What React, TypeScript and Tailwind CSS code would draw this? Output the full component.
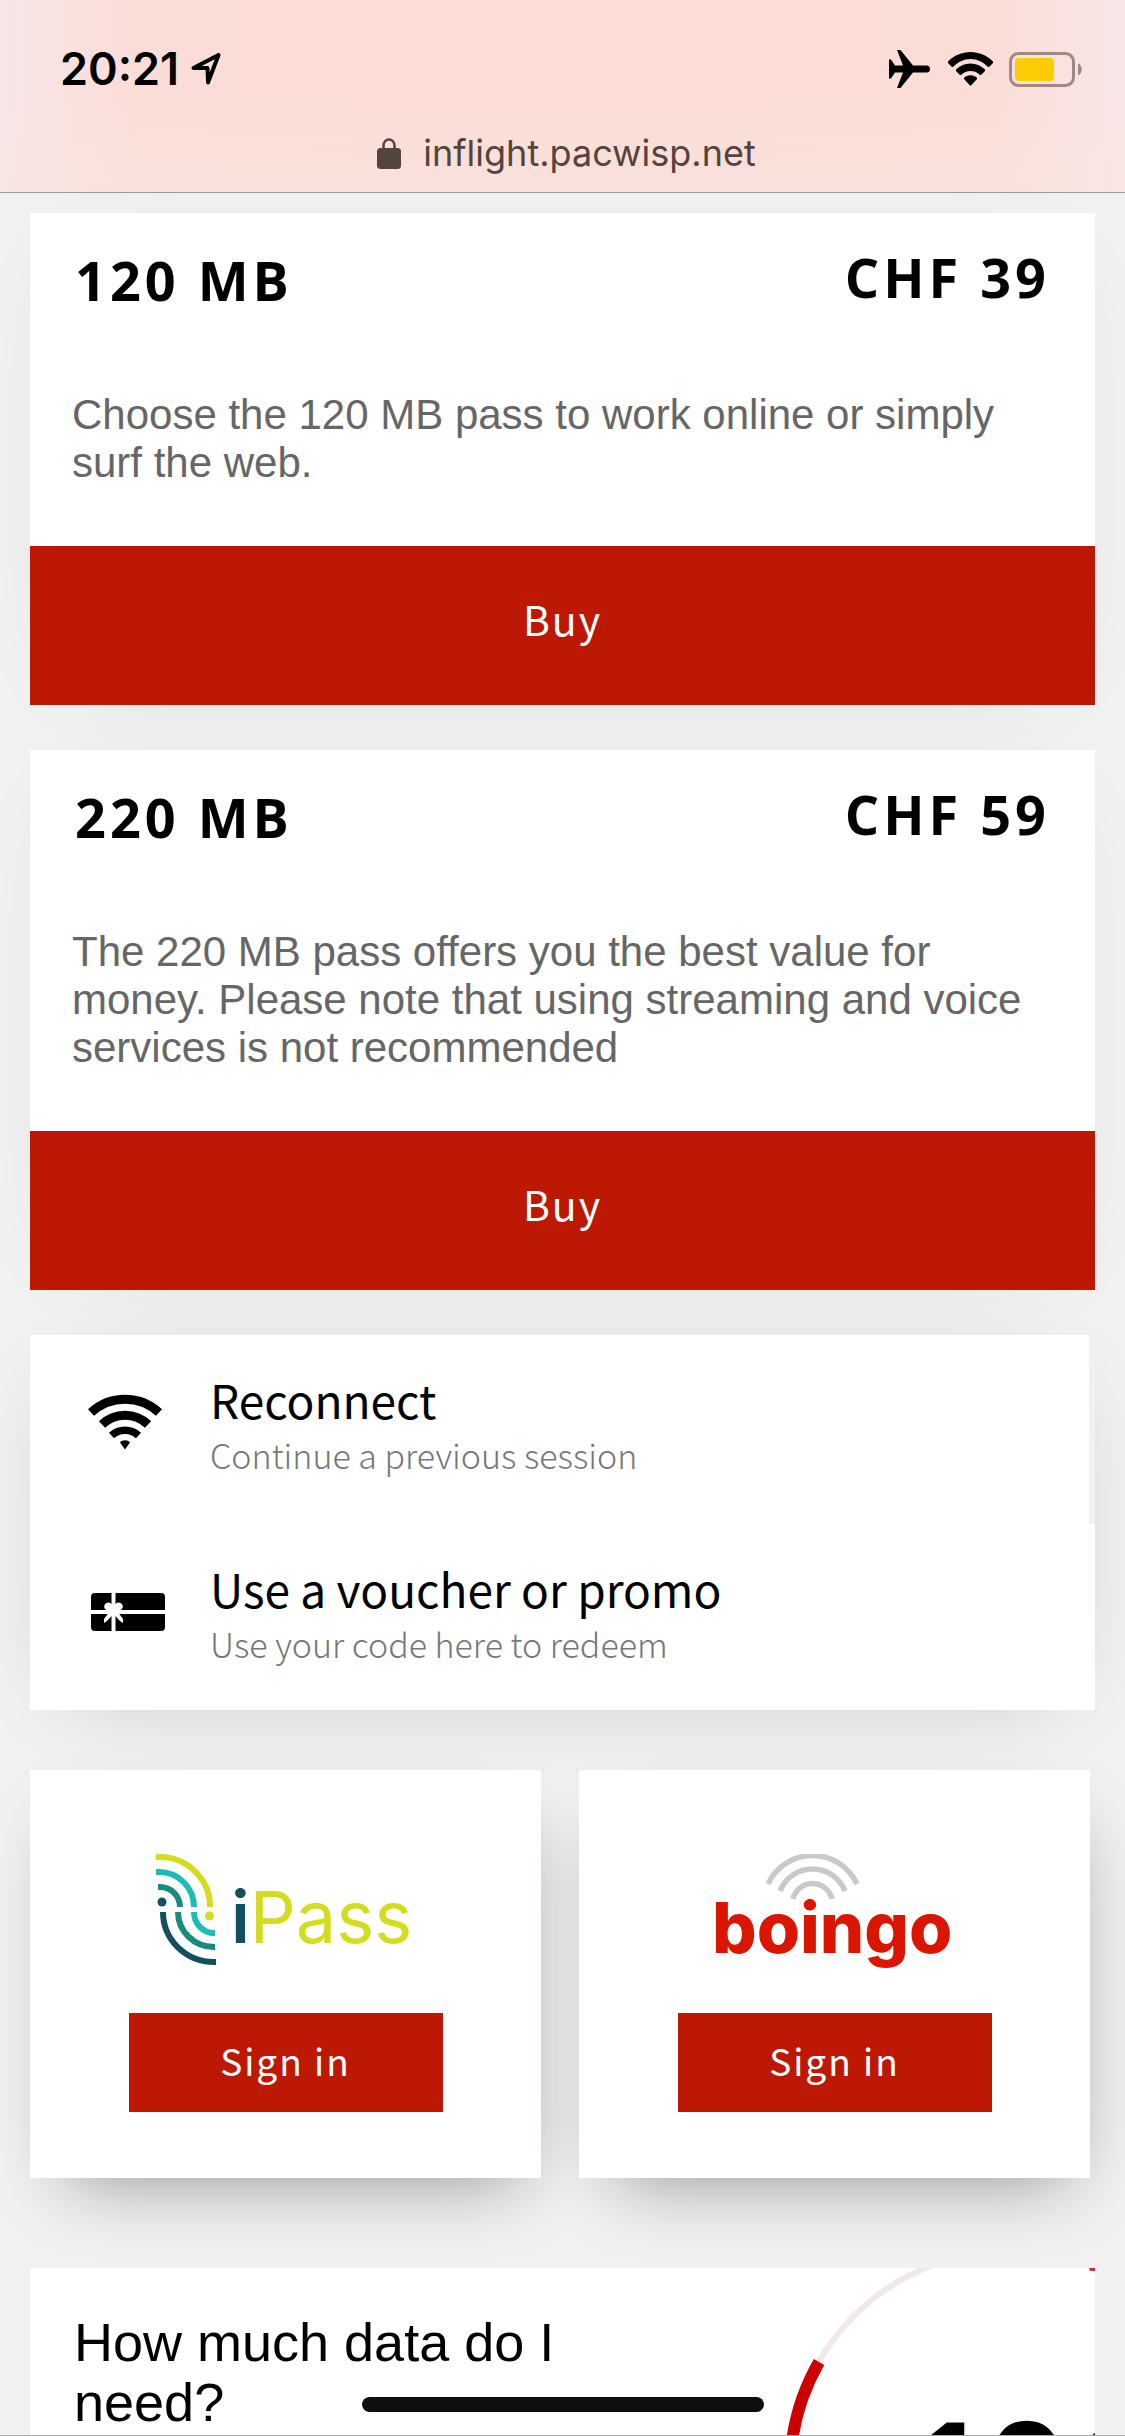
import type { ReactNode } from "react";
import { clsx } from "clsx";

const plans = [
  {
    name: "120 MB",
    price: "CHF 39",
    text: "Choose the 120 MB pass to work online or simply surf the web.",
  },
  {
    name: "220 MB",
    price: "CHF 59",
    text: "The 220 MB pass offers you the best value for money. Please note that using streaming and voice services is not recommended",
  },
];

const headingFont = "font-['Open_Sans',sans-serif]";
const brandFont = "font-['Noto_Sans_CJK_JP','Noto_Sans',sans-serif]";
const bodyFont = "font-['Liberation_Sans',Arial,sans-serif]";

function StatusBar() {
  return (
    <header className="bg-[linear-gradient(to_bottom,transparent_50%,#f9e6e080),linear-gradient(to_right,#f7e6e7,#fbddd7_12%,#fbdcd6_50%,#fbddd7_88%,#f8e6e7)] border-b border-[#a09a9c] pt-[37px] pb-[11px] font-['Inter',sans-serif]">
      <div className="h-16 flex items-center justify-between pl-15 pr-[43px]">
        <div className="flex items-center gap-3">
          <span className="text-[45px] font-semibold text-black">20:21</span>
          <svg viewBox="0 0 30 32" className="w-[30px] h-8" fill="none" stroke="#000" strokeWidth="4" strokeLinejoin="round">
            <path d="M2.500 15 27.500 2 17 29.500 16.500 15Z" />
          </svg>
        </div>
        <div className="flex items-center">
          <svg viewBox="0 0 41 38" className="w-[41px] h-[38px] mr-[18px]" fill="#000">
            <path d="M8 0h3.500L24 15.500h13.500a3.500 3.500 0 0 1 0 7H24L11.500 38H8l6-15.500H6L2 28.500H0v-19h2l4 6h8Z" />
          </svg>
          <svg viewBox="0 0 45 34" className="w-[45px] h-[34px] mr-4" fill="#000">
            <path d="M22.500 0C31 0 39 3.500 45 9.500v1.500l-4 4h-1C35.500 10 29 7 22.500 7S9.500 10 5 15H4l-4-4V9.500C6 3.500 14 0 22.500 0Z" />
            <path d="M22.500 11.500c5.500 0 10.500 2.300 14.500 6v1.500l-4 4h-1c-2.500-2.500-6-4-9.500-4s-7 1.500-9.500 4h-1l-4-4v-1.500c4-3.700 9-6 14.500-6Z" />
            <path d="M22.500 23.300c2.500 0 5 1 6.500 2.500v1.200l-6 6.500h-1l-6-6.500v-1.200c1.500-1.500 4-2.500 6.500-2.500Z" />
          </svg>
          <svg viewBox="0 0 73 35" className="w-[73px] h-[35px]">
            <rect x="1.500" y="1.500" width="63" height="32" rx="8" fill="none" stroke="#9f8985" strokeWidth="3" />
            <rect x="6" y="6" width="39" height="23" rx="4" fill="#fccb00" />
            <path d="M69 11.500c5 2 5 10 0 12Z" fill="#9f8985" />
          </svg>
        </div>
      </div>
      <div className="mt-6 h-14 flex items-center justify-center gap-[22px] pl-2 text-[#54443f]">
        <svg viewBox="0 0 24 31" className="w-6 h-[31px]" fill="none">
          <path d="M6.500 12V7.500a5.500 6 0 0 1 11 0V12" stroke="currentColor" strokeWidth="2.500" />
          <rect y="10" width="24" height="21" rx="3.500" fill="currentColor" />
        </svg>
        <span className="text-[36px]">inflight.pacwisp.net</span>
      </div>
    </header>
  );
}

function PlanCard({ name, price, text }: { name: string; price: string; text: string }) {
  return (
    <section className="bg-white shadow-[0_10px_100px_-50px_rgba(0,0,0,0.12)]">
      <div className="pt-[34px] px-[42px]">
        <div className={clsx("flex items-start justify-between px-[3px] text-[54px] font-bold tracking-[4px] text-black", headingFont)}>
          <h2 className="leading-[66px]">{name}</h2>
          <p className="leading-[60px]">{price}</p>
        </div>
        <p className={clsx("mt-[78px] pb-[59px] text-[42px] leading-[48px] text-[#666]", bodyFont)}>{text}</p>
      </div>
      <button type="button" className={clsx("block w-full h-[159px] pb-3.5 bg-[#bd1803] text-[41px] tracking-[2px] text-white", brandFont)}>
        Buy
      </button>
    </section>
  );
}

function WifiIcon() {
  return (
    <svg viewBox="0 0 74 56" className="w-[74px] h-14" fill="none" stroke="#000">
      <path d="M3 18.500A50 50 0 0 1 71 18.500" strokeWidth="9" />
      <path d="M14 30.500A33 33 0 0 1 60 30.500" strokeWidth="9" />
      <path d="M23.500 41.500A20 20 0 0 1 50.500 41.500" strokeWidth="7.500" />
      <path d="M32 48.500c2-3 8-3 10 0L37 55.500Z" fill="#000" stroke="none" />
    </svg>
  );
}

function VoucherIcon() {
  return (
    <svg viewBox="-3 -10 77 48" className="w-[77px] h-12">
      <rect width="74" height="38" rx="4" fill="#000" />
      <path d="M0 19h74M22.500 0v38" stroke="#fff" strokeWidth="4" />
      <path d="M22.500 21c-4-3-11-4-9-9 3-4 7-3 9 3 2-6 6-7 9-3 2 5-5 6-9 9ZM19 18h7l6 8v4l-3-2-6.500-7-6.500 7-3 2v-4Z" fill="#fff" />
    </svg>
  );
}

function ActionRow({ icon, title, note, className }: { icon: ReactNode; title: string; note: string; className: string }) {
  return (
    <a href="#" className={clsx("flex items-start bg-white pt-[34px] pl-[58px]", brandFont, className)}>
      <span className="w-[122px] pt-[25px]">{icon}</span>
      <span className="block">
        <span className="block text-[46px] leading-[60px] text-black">{title}</span>
        <span className="block text-[34px] leading-[52px] font-light text-[#777]">{note}</span>
      </span>
    </a>
  );
}

function IPassLogo() {
  return (
    <svg viewBox="0 0 259 117" className="w-[259px] h-[117px]" role="img" aria-label="iPass">
      <g fill="none" strokeWidth="6">
        <path d="M0 3h4a50 50 0 0 1 50 50" stroke="#d3dc1f" />
        <path d="M0 18h3a35 35 0 0 1 35 35" stroke="#1dbdb5" />
        <path d="M2 33h2a20 20 0 0 1 20 20" stroke="#1a8a7c" />
        <path d="M7 58a51 50 0 0 0 51 50h2" stroke="#12505f" />
        <path d="M22 58a36 35 0 0 0 36 35h1" stroke="#1a8a7c" />
        <path d="M38 58a20 21 0 0 0 20 21h1" stroke="#1dbdb5" />
      </g>
      <circle cx="6" cy="48" r="4.500" fill="#12505f" />
      <circle cx="53.500" cy="62" r="4.500" fill="#d3dc1f" />
      <text x="75" y="89" fontSize="72" className="font-['Inter',sans-serif]" fill="#d3dc1f">
        <tspan fill="#12505f" fontWeight="600">i</tspan>Pass
      </text>
    </svg>
  );
}

function BoingoLogo() {
  return (
    <svg viewBox="0 0 240 117" className="w-60 h-[117px]" role="img" aria-label="boingo">
      <g fill="none" stroke="#c9c9c9" strokeWidth="5.500">
        <path d="M53 30a49 49 0 0 1 89 0" />
        <path d="M65 37a35 35 0 0 1 65 0" />
        <path d="M78 45a20 20 0 0 1 39 0" />
      </g>
      <text x="-3" y="99" fontSize="70" fontWeight="800" className="font-['Inter',sans-serif]" fill="#da1600">
        boingo
      </text>
    </svg>
  );
}

function PartnerCard({ logo }: { logo: ReactNode }) {
  return (
    <section className="flex flex-col items-center bg-white pt-[84px] pb-[66px] shadow-[8px_30px_70px_-30px_rgba(0,0,0,0.4)]">
      {logo}
      <button type="button" className={clsx("mt-[42px] w-[314px] h-[99px] pb-1 bg-[#bd1803] text-[37px] tracking-[2px] text-white", brandFont)}>
        Sign in
      </button>
    </section>
  );
}

function DataMeter() {
  return (
    <svg viewBox="0 0 345 420" className="w-[345px] h-[420px] shrink-0" role="img" aria-label="101">
      <circle cx="260" cy="203" r="220" fill="none" stroke="#f2e8e9" strokeWidth="6" />
      <path d="M69 94A220 220 0 0 0 69 312" fill="none" stroke="#cc0000" strokeWidth="12" />
      <path d="M339 0h6v3h-5Z" fill="#cc3030" />
      <text x="277" y="256" textAnchor="middle" fontSize="141" fontWeight="700" className="font-['Open_Sans',sans-serif]">
        101
      </text>
    </svg>
  );
}

export default function App() {
  return (
    <div className="relative h-screen overflow-hidden bg-[#f1f1f1]">
      <StatusBar />
      <main>
        <div className="flex flex-col gap-[45px] px-[30px] pt-5">
          {plans.map((plan) => (
            <PlanCard key={plan.name} {...plan} />
          ))}
          <nav className="shadow-[0_16px_100px_-45px_rgba(0,0,0,0.24)]">
            <ActionRow icon={<WifiIcon />} title="Reconnect" note="Continue a previous session" className="pb-[43px] mr-1.5" />
            <ActionRow icon={<VoucherIcon />} title="Use a voucher or promo" note="Use your code here to redeem" className="pb-10" />
          </nav>
        </div>

        <div className="mt-[60px] grid grid-cols-2 gap-[38px] pl-[30px] pr-[35px]">
          <PartnerCard logo={<IPassLogo />} />
          <PartnerCard logo={<BoingoLogo />} />
        </div>

        <section className="mt-[90px] mx-[30px] flex items-start justify-between bg-white">
          <h2 className={clsx("max-w-[560px] pt-11 pl-11 text-[54px] leading-[60px] text-black", bodyFont)}>
            How much data do I need?
          </h2>
          <DataMeter />
        </section>
      </main>

      {/* home indicator */}
      <div className="absolute inset-x-0 bottom-0 flex justify-center border-b border-[#aaa] pb-[23px]">
        <div className="w-[402px] h-[15px] rounded-full bg-[#0e0e0e]" />
      </div>
    </div>
  );
}
